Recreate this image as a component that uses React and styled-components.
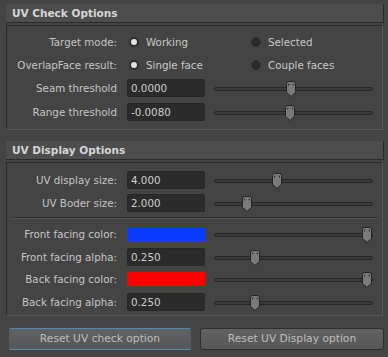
import React from 'react';
import styled, { createGlobalStyle } from 'styled-components';

const GlobalStyle = createGlobalStyle`
  html, body {
    margin: 0;
    padding: 0;
    background: #444444;
  }
  body {
    font-family: "DejaVu Sans", Verdana, sans-serif;
    font-size: 10.3px;
    color: #c8c8c8;
  }
`;

const Page = styled.div`
  width: 388px;
  height: 357px;
  box-sizing: border-box;
  padding: 4px 4px 0 6px;
  background: #444444;
  overflow: hidden;
`;

const Section = styled.div`
  margin-bottom: ${p => p.$gap || 0}px;
`;

const Header = styled.div`
  height: 19px;
  box-sizing: border-box;
  background: #4d4d4d;
  border-right: 1px solid #2a2a2a;
  border-bottom: 1px solid #2a2a2a;
  padding-left: 6px;
  font-weight: bold;
  font-size: 10.5px;
  line-height: 18px;
  color: #d6d6d6;
  margin-bottom: 2px;
`;

const Frame = styled.div`
  margin-right: 1px;
  box-sizing: border-box;
  height: ${p => p.$height}px;
  background: #444444;
  border-top: 1px solid #2c2c2c;
  border-left: 1px solid #2c2c2c;
  border-right: 1px solid #595959;
  border-bottom: 1px solid #595959;
  padding-top: ${p => p.$padTop || 4}px;
`;

const Row = styled.div`
  display: grid;
  grid-template-columns: 113px 78px 1fr;
  column-gap: 7px;
  align-items: center;
  height: ${p => p.$h || 23}px;
`;

const Label = styled.div`
  text-align: right;
  padding-right: 3px;
  color: #c6c6c6;
  white-space: nowrap;
`;

const Field = styled.div`
  height: 18px;
  box-sizing: border-box;
  background: #2b2b2b;
  border: 1px solid #262626;
  border-radius: 2px;
  padding-left: 3px;
  line-height: 17px;
  color: #cfcfcf;
`;

const Swatch = styled.div`
  height: 14px;
  background: ${p => p.$color};
`;

const RadioGroup = styled.div`
  grid-column: 2 / 4;
  display: grid;
  grid-template-columns: 122px 1fr;
`;

const RadioOption = styled.div`
  display: flex;
  align-items: center;
  gap: 7px;
  padding-left: 1px;
  color: #c8c8c8;
`;

const RadioDot = styled.span`
  width: 10px;
  height: 10px;
  border-radius: 50%;
  box-sizing: border-box;
  background: ${p => (p.$on ? '#e4e4e4' : '#2a2a2a')};
  border: ${p => (p.$on ? '2px solid #2e2e2e' : '1px solid #2e2e2e')};
  margin-left: 1px;
`;

const SliderWrap = styled.div`
  position: relative;
  height: 18px;
  margin: 0 9px 0 2px;
`;

const Track = styled.div`
  position: absolute;
  left: 0;
  right: 0;
  top: 8px;
  height: 4px;
  box-sizing: border-box;
  border-radius: 2px;
  background: #3a3a3a;
  border: 1px solid #262626;
`;

const Handle = styled.svg`
  position: absolute;
  top: 2px;
  margin-left: -6px;
`;

const Separator = styled.div`
  height: 0;
  border-top: 1px solid #2e2e2e;
  border-bottom: 1px solid #555;
  margin: 3px 4px 4px 6px;
`;

const ButtonRow = styled.div`
  display: grid;
  grid-template-columns: 1fr 1fr;
  column-gap: 8px;
  padding: 0 0 0 2px;
`;

const Button = styled.div`
  height: 22px;
  box-sizing: border-box;
  border-radius: 3px;
  background: linear-gradient(#616161, #575757);
  border: 1px solid ${p => (p.$focus ? '#5b87ad' : '#2d2d2d')};
  ${p => p.$focus && 'border-left-color: #3a4a58; border-right-color: #3a4a58;'}
  color: #bdbdbd;
  font-size: 10.7px;
  text-align: center;
  line-height: 20px;
`;

const Slider = ({ value }) => (
  <SliderWrap>
    <Track />
    <Handle
      width="12"
      height="16"
      viewBox="0 0 12 16"
      style={{ left: `${value * 100}%` }}
    >
      <path
        d="M1.5 2.5 Q1.5 0.5 3.5 0.5 L8.5 0.5 Q10.5 0.5 10.5 2.5 L10.5 11.5 L6 15.5 L1.5 11.5 Z"
        fill="#7a7a7a"
        stroke="#222"
        strokeWidth="1"
      />
      <path d="M3.5 3 L3.5 4.5 M3.5 3 L4.5 3 M8.5 3 L8.5 4.5 M8.5 3 L7.5 3" stroke="#333" strokeWidth="1" />
    </Handle>
  </SliderWrap>
);

const RadioRow = ({ label, options, selected }) => (
  <Row>
    <Label>{label}</Label>
    <RadioGroup>
      {options.map((o, i) => (
        <RadioOption key={o}>
          <RadioDot $on={i === selected} />
          {o}
        </RadioOption>
      ))}
    </RadioGroup>
  </Row>
);

const FieldRow = ({ label, value, pos, h }) => (
  <Row $h={h}>
    <Label>{label}</Label>
    <Field>{value}</Field>
    <Slider value={pos} />
  </Row>
);

const ColorRow = ({ label, color, pos, h }) => (
  <Row $h={h}>
    <Label>{label}</Label>
    <Swatch $color={color} />
    <Slider value={pos} />
  </Row>
);

export default function App() {
  return (
    <Page>
      <GlobalStyle />
      <Section $gap={11}>
        <Header>UV Check Options</Header>
        <Frame $height={105} $padTop={4}>
          <RadioRow label="Target mode:" options={['Working', 'Selected']} selected={0} />
          <RadioRow label="OverlapFace result:" options={['Single face', 'Couple faces']} selected={0} />
          <FieldRow label="Seam threshold" value="0.0000" pos={0.485} h={24} />
          <FieldRow label="Range threshold" value="-0.0080" pos={0.48} h={24} />
        </Frame>
      </Section>

      <Section $gap={12}>
        <Header>UV Display Options</Header>
        <Frame $height={154} $padTop={5}>
          <FieldRow label="UV display size:" value="4.000" pos={0.395} />
          <FieldRow label="UV Boder size:" value="2.000" pos={0.205} />
          <Separator />
          <ColorRow label="Front facing color:" color="#0a3cff" pos={0.965} h={22} />
          <FieldRow label="Front facing alpha:" value="0.250" pos={0.26} h={23} />
          <ColorRow label="Back facing color:" color="#ff0000" pos={0.965} h={22} />
          <FieldRow label="Back facing alpha:" value="0.250" pos={0.26} h={23} />
        </Frame>
      </Section>

      <ButtonRow>
        <Button $focus>Reset UV check option</Button>
        <Button>Reset UV Display option</Button>
      </ButtonRow>
    </Page>
  );
}
